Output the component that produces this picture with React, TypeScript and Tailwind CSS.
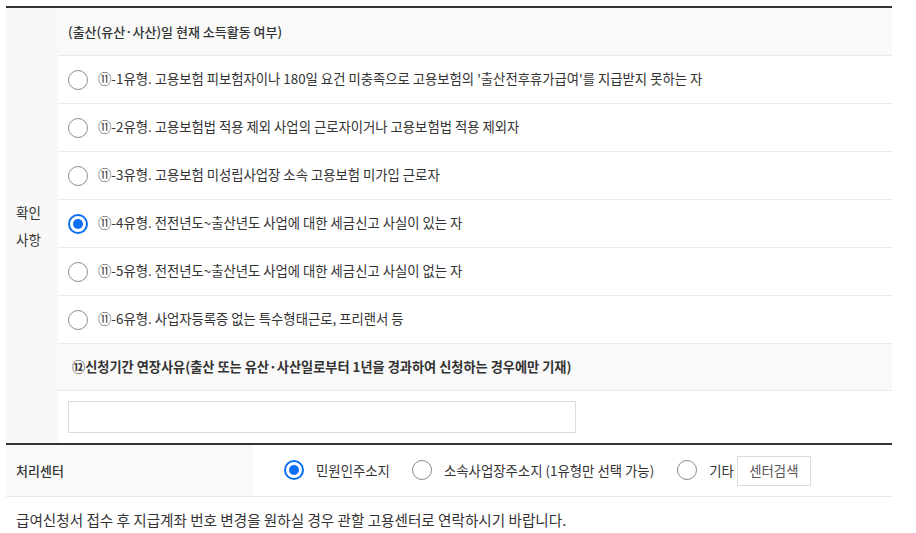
import React from "react";

const font = { fontFamily: '"Noto Sans CJK KR", "Noto Sans", sans-serif' };

function Radio({ checked }: { checked?: boolean }) {
  if (checked) {
    return (
      <span className="flex h-[20px] w-[20px] shrink-0 items-center justify-center rounded-full border-2 border-[#0b6ef6] bg-white">
        <span className="h-[10px] w-[10px] rounded-full bg-[#0b6ef6]" />
      </span>
    );
  }
  return <span className="h-[20px] w-[20px] shrink-0 rounded-full border-[1.5px] border-[#8c8c8c] bg-white" />;
}

const options = [
  "⑪-1유형. 고용보험 피보험자이나 180일 요건 미충족으로 고용보험의 '출산전후휴가급여'를 지급받지 못하는 자",
  "⑪-2유형. 고용보험법 적용 제외 사업의 근로자이거나 고용보험법 적용 제외자",
  "⑪-3유형. 고용보험 미성립사업장 소속 고용보험 미가입 근로자",
  "⑪-4유형. 전전년도~출산년도 사업에 대한 세금신고 사실이 있는 자",
  "⑪-5유형. 전전년도~출산년도 사업에 대한 세금신고 사실이 없는 자",
  "⑪-6유형. 사업자등록증 없는 특수형태근로, 프리랜서 등",
];

export default function App() {
  return (
    <div className="min-h-[533px] w-[916px] bg-white pt-[6px] text-[13px] text-[#333]" style={font}>
      <div className="ml-[6px] w-[886px]">
        {/* 확인 사항 */}
        <div className="flex border-t-2 border-[#333]">
          <div className="flex w-[52px] shrink-0 items-center bg-[#f8f8f8] pl-[10px]">
            <span className="text-[13.5px] leading-[27px] text-[#333]">
              확인
              <br />
              사항
            </span>
          </div>
          <div className="flex flex-1 flex-col">
            <div className="flex h-[48px] items-center border-b border-[#e8e8e8] bg-[#f9f9f9] pl-[10px] font-medium">
              (출산(유산·사산)일 현재 소득활동 여부)
            </div>
            {options.map((text, i) => (
              <div key={i} className="flex h-[48px] items-center gap-[10px] border-b border-[#ebebeb] pl-[10px]">
                <Radio checked={i === 3} />
                <span className="text-[13.35px]">{text}</span>
              </div>
            ))}
            <div className="flex h-[47px] items-center border-b border-[#e8e8e8] bg-[#f9f9f9] pl-[14px] text-[13.2px] font-semibold">
              ⑫신청기간 연장사유(출산 또는 유산·사산일로부터 1년을 경과하여 신청하는 경우에만 기재)
            </div>
            <div className="flex h-[52px] items-center pl-[10px]">
              <input className="h-[32px] w-[508px] border border-[#dcdcdc] bg-white px-2 outline-none" />
            </div>
          </div>
        </div>

        {/* 처리센터 */}
        <div className="flex h-[54px] border-t-2 border-b border-t-[#333] border-b-[#e8e8e8]">
          <div className="flex w-[247px] items-center bg-[#f9f9f9] pl-[10px] font-medium">처리센터</div>
          <div className="flex flex-1 items-center pl-[31px] text-[13.4px]">
            <label className="flex items-center gap-[12px]">
              <Radio checked />
              <span>민원인주소지</span>
            </label>
            <label className="ml-[22px] flex items-center gap-[12px]">
              <Radio />
              <span>소속사업장주소지 (1유형만 선택 가능)</span>
            </label>
            <label className="ml-[23px] flex items-center gap-[12px]">
              <Radio />
              <span>기타</span>
            </label>
            <button className="ml-[3px] h-[30px] w-[74px] border border-[#dcdcdc] bg-white text-[13.4px] text-[#555]">
              센터검색
            </button>
          </div>
        </div>

        <div className="pl-[10px] pt-[12px] text-[14.6px]">
          급여신청서 접수 후 지급계좌 번호 변경을 원하실 경우 관할 고용센터로 연락하시기 바랍니다.
        </div>
      </div>
    </div>
  );
}
